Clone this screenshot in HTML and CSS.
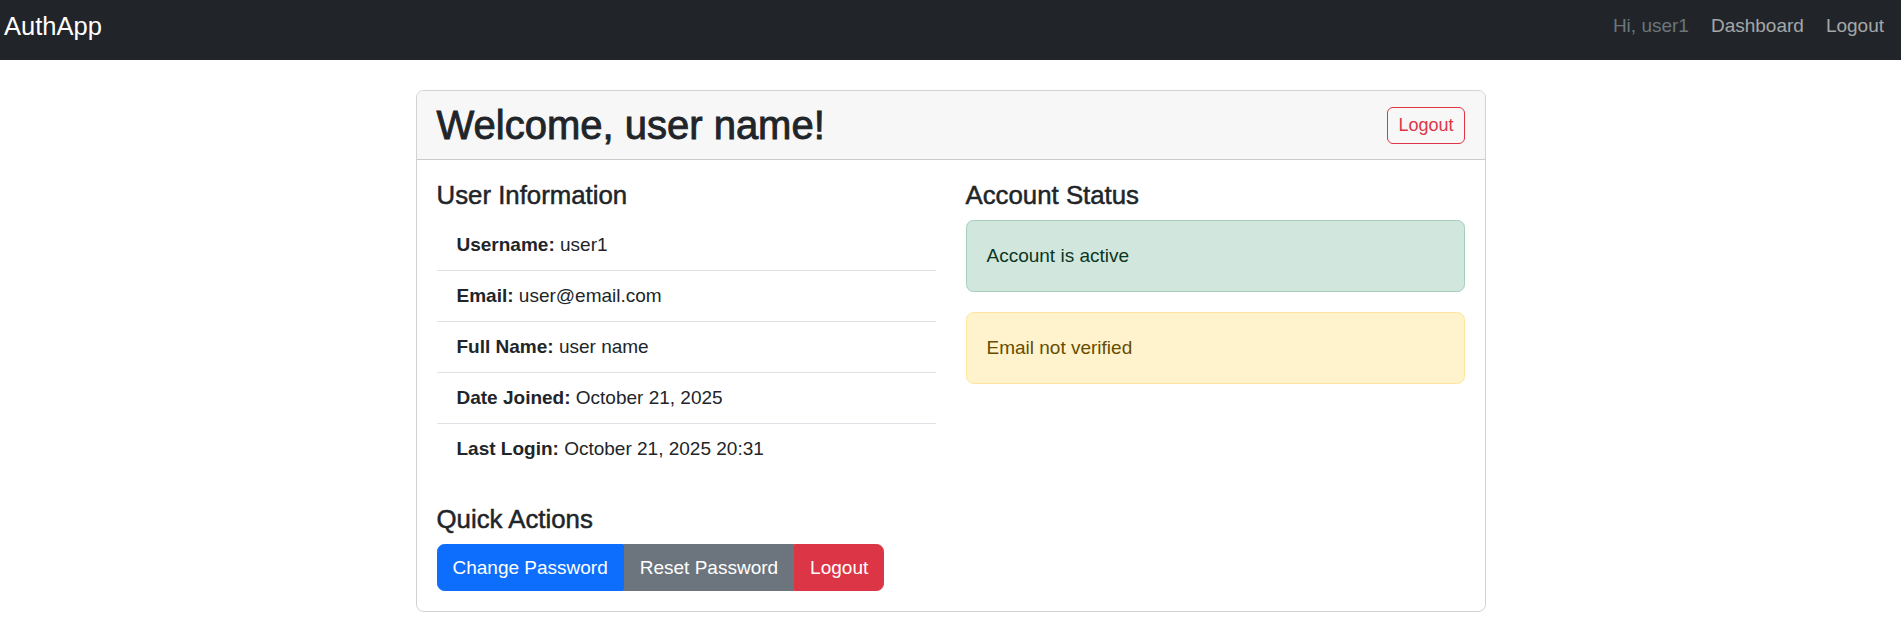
FILE: index.html
```html
<!DOCTYPE html>
<html lang="en">
<head>
<meta charset="utf-8">
<title>AuthApp - Dashboard</title>
<link rel="stylesheet" href="styles.css">
</head>
<body>
<nav class="navbar">
  <a class="brand" href="#">AuthApp</a>
  <ul class="nav">
    <li><span class="nav-text">Hi, user1</span></li>
    <li><a class="nav-link" href="#">Dashboard</a></li>
    <li><a class="nav-link" href="#">Logout</a></li>
  </ul>
</nav>

<main class="card">
  <header class="card-header">
    <h1 class="title">Welcome, user name!</h1>
    <a class="btn-outline-danger" href="#">Logout</a>
  </header>
  <div class="card-body">
    <div class="cols">
      <section class="col">
        <h2 class="section-title">User Information</h2>
        <ul class="info-list">
          <li><strong>Username:</strong> user1</li>
          <li><strong>Email:</strong> user@email.com</li>
          <li><strong>Full Name:</strong> user name</li>
          <li><strong>Date Joined:</strong> October 21, 2025</li>
          <li><strong>Last Login:</strong> October 21, 2025 20:31</li>
        </ul>
        <h2 class="section-title">Quick Actions</h2>
        <div class="btn-group">
          <button class="btn btn-primary" type="button">Change Password</button>
          <button class="btn btn-secondary" type="button">Reset Password</button>
          <button class="btn btn-danger" type="button">Logout</button>
        </div>
      </section>
      <section class="col">
        <h2 class="section-title">Account Status</h2>
        <div class="alert alert-success">Account is active</div>
        <div class="alert alert-warning">Email not verified</div>
      </section>
    </div>
  </div>
</main>
</body>
</html>
```
FILE: styles.css
```css
* {
  box-sizing: border-box;
}

body {
  margin: 0;
  font-family: "Liberation Sans", Arial, sans-serif;
  font-size: 19px;
  line-height: 30px;
  color: #212529;
  background: #fff;
}

/* Navbar */
.navbar {
  display: flex;
  justify-content: space-between;
  align-items: flex-start;
  height: 60px;
  padding: 11px 17px 0 4px;
  background: #212529;
}

.brand {
  font-size: 25.5px;
  line-height: 30px;
  color: #fff;
  text-decoration: none;
}

.nav {
  display: flex;
  gap: 22px;
  list-style: none;
  margin: 0;
  padding: 0;
}

.nav-text {
  color: #6c757d;
}

.nav-link {
  color: rgba(255, 255, 255, 0.6);
  text-decoration: none;
}

/* Card */
.card {
  width: 1070px;
  margin: 30px auto 0;
  border: 1px solid rgba(0, 0, 0, 0.175);
  border-radius: 7.5px;
}

.card-header {
  display: flex;
  justify-content: space-between;
  align-items: center;
  padding: 10px 20px;
  background: #f7f7f7;
  border-bottom: 1px solid rgba(0, 0, 0, 0.175);
  border-radius: 6.5px 6.5px 0 0;
}

.title {
  margin: 0;
  font-size: 40px;
  line-height: 48px;
  font-weight: 500;
  -webkit-text-stroke: 0.9px currentColor;
}

.btn-outline-danger {
  display: inline-block;
  font-size: 18px;
  line-height: 25px;
  padding: 5px 10px;
  border: 1px solid #dc3545;
  border-radius: 6px;
  color: #dc3545;
  text-decoration: none;
}

.card-body {
  padding: 20px;
}

.cols {
  display: grid;
  grid-template-columns: 1fr 1fr;
  column-gap: 30px;
}

.section-title {
  margin: 0 0 10px;
  font-size: 25.8px;
  line-height: 30px;
  font-weight: 500;
  -webkit-text-stroke: 0.5px currentColor;
}

.info-list {
  list-style: none;
  margin: 0 0 30px;
  padding: 0;
}

.info-list li {
  padding: 10px 20px;
  border-bottom: 1px solid #dee2e6;
}

.info-list li:last-child {
  border-bottom: 0;
}

.btn-group {
  display: inline-flex;
}

.btn {
  font-family: inherit;
  font-size: 19px;
  line-height: 30px;
  padding: 7.5px 15px;
  border: 1px solid transparent;
  color: #fff;
  border-radius: 0;
  cursor: pointer;
}

.btn:first-child {
  border-radius: 7.5px 0 0 7.5px;
}

.btn:last-child {
  border-radius: 0 7.5px 7.5px 0;
}

.btn-primary {
  background: #0d6efd;
  border-color: #0d6efd;
}

.btn-secondary {
  background: #6c757d;
  border-color: #6c757d;
}

.btn-danger {
  background: #dc3545;
  border-color: #dc3545;
}

.alert {
  padding: 20px;
  margin-bottom: 20px;
  border: 1px solid transparent;
  border-radius: 7.5px;
}

.alert-success {
  color: #0a3622;
  background: #d1e7dd;
  border-color: #a3cfbb;
}

.alert-warning {
  color: #664d03;
  background: #fff3cd;
  border-color: #ffe69c;
}
```
